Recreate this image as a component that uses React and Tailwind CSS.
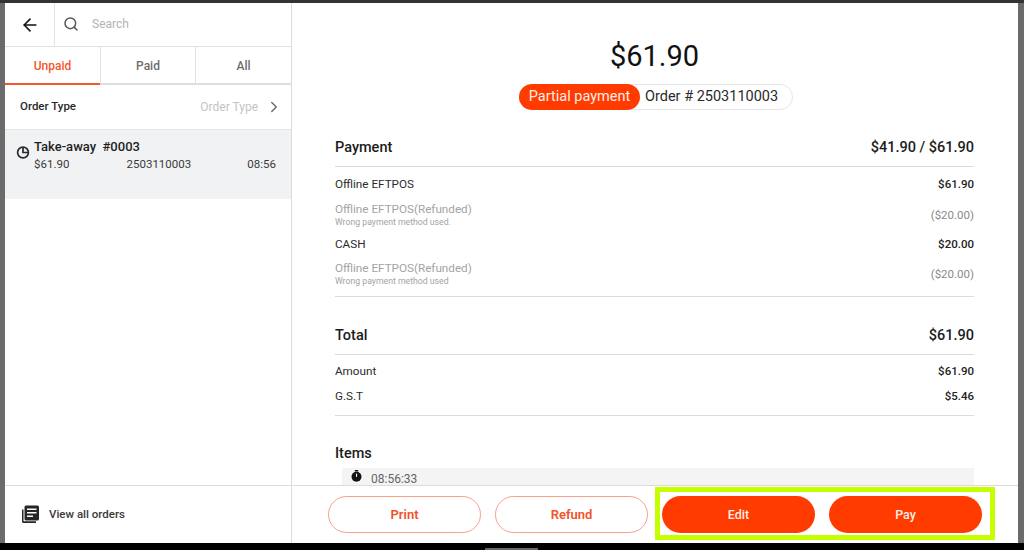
import React from "react";
import { ArrowLeft, Search, ChevronRight } from "lucide-react";

const Row = ({ label, value, sub, muted, className = "" }) => (
  <div className={`flex justify-between items-center ${className}`}>
    <div className="flex flex-col">
      <span className={`text-[11.7px] leading-[14px] ${muted ? "text-[#a3a3a3]" : "text-[#2b2b2b]"}`}>{label}</span>
      {sub && <span className="text-[8.7px] leading-[10px] mt-[1px] text-[#a3a3a3]">{sub}</span>}
    </div>
    <span className={`text-[11.5px] leading-[14px] ${muted ? "text-[#8a8a8a]" : "font-medium text-[#222]"}`}>{value}</span>
  </div>
);

const Head = ({ label, value, className = "" }) => (
  <div className={`flex justify-between items-center border-b border-[#dcdcdc] ${className}`}>
    <span className="text-[14.5px] leading-[16px] font-medium text-[#1c1c1c]">{label}</span>
    {value && <span className="text-[14.5px] leading-[16px] font-medium text-[#1c1c1c]">{value}</span>}
  </div>
);

const Outline = ({ children }) => (
  <button className="w-[153px] h-[37px] pt-px rounded-full border border-[#f4a28c] bg-white text-[#f4512c] text-[13px] font-semibold">{children}</button>
);
const Solid = ({ children }) => (
  <button className="w-[153px] h-[37px] pt-px rounded-full bg-[#ff3b00] text-[#fbeee9] text-[12.5px] font-medium">{children}</button>
);

const ClockPie = () => (
  <svg width="14" height="14" viewBox="0 0 14 14" fill="none" stroke="#2a2a2a" strokeWidth="1.7">
    <circle cx="7" cy="7.5" r="5.4" />
    <path d="M7 2.2V7.5H12.2" />
  </svg>
);

const Stopwatch = () => (
  <svg width="11" height="12" viewBox="0 0 11 12">
    <rect x="3.8" y="0" width="3.4" height="1.5" fill="#111" />
    <circle cx="5.5" cy="6.8" r="5" fill="#111" />
    <rect x="5" y="3.6" width="1.1" height="3.2" fill="#fff" />
  </svg>
);

const Orders = () => (
  <svg width="18" height="19" viewBox="0 0 18 19" fill="#262626">
    <path d="M1 4.5h1.5v11.8H15V18H2.5A1.5 1.5 0 0 1 1 16.5Z" />
    <path fillRule="evenodd" d="M5 0.5h11.5A1.5 1.5 0 0 1 18 2v12a1.5 1.5 0 0 1-1.5 1.5H5A1.5 1.5 0 0 1 3.5 14V2A1.5 1.5 0 0 1 5 0.5ZM6 3.6v1.5h9.5V3.6Zm0 3.4v1.5h9.5V7Zm0 3.4v1.5h6v-1.5Z" />
  </svg>
);

export default function App() {
  return (
    <div className="relative w-[1024px] h-[550px] overflow-hidden flex flex-col bg-[#6b6b6b] font-['Roboto',sans-serif]">
      <div className="h-[3px] bg-[#333]" />
      <div className="flex-1 min-h-0 flex pl-[5px] pr-[6px]">
        <div className="flex-1 flex flex-col bg-white min-w-0">
          <div className="flex-1 min-h-0 flex">
            <aside className="w-[287px] shrink-0 border-r border-[#dcdcdc] flex flex-col">
              <div className="h-[44px] flex border-b border-[#e2e2e2]">
                <div className="w-[50px] flex items-center justify-center border-r border-[#e2e2e2]">
                  <ArrowLeft size={20} strokeWidth={1.9} color="#111" />
                </div>
                <div className="flex-1 flex items-center pl-[8px] pb-px">
                  <Search size={16} strokeWidth={2.2} color="#555" />
                  <span className="ml-[13px] text-[12px] text-[#b4b4b4]">Search</span>
                </div>
              </div>
              <div className="h-[38px] flex border-b-2 border-[#dedede] text-[12px] font-medium text-[#6e6e6e]">
                <div className="w-[95px] -mb-[2px] pt-px flex items-center justify-center border-b-2 border-[#f4572d] text-[#f4572d]">Unpaid</div>
                <div className="w-[95px] pt-px flex items-center justify-center border-l border-[#e2e2e2]">Paid</div>
                <div className="flex-1 pt-px flex items-center justify-center border-l border-[#e2e2e2]">All</div>
              </div>
              <div className="h-[44px] flex items-center justify-between pl-[15px] pr-[8px] text-[12px]">
                <span className="font-medium text-[#2a2a2a] text-[11.5px]">Order Type</span>
                <span className="flex items-center gap-[7px] text-[#c4c4c4]">
                  Order Type
                  <ChevronRight size={18} color="#666" strokeWidth={1.8} />
                </span>
              </div>
              <div className="h-[70px] bg-[#f1f2f4] border-t border-[#e6e6e6] flex pl-[12px] pr-[15px] pt-[9px]">
                <div className="w-[18px] pt-[6px] shrink-0 -ml-px"><ClockPie /></div>
                <div className="flex-1">
                  <div className="text-[13px] leading-[15px] font-medium text-[#1f1f1f] whitespace-pre">Take-away  #0003</div>
                  <div className="flex justify-between mt-[3px] text-[11.5px] leading-[14px] text-[#3a3a3a]">
                    <span>$61.90</span>
                    <span className="ml-[1px]">2503110003</span>
                    <span>08:56</span>
                  </div>
                </div>
              </div>
            </aside>
            <main className="flex-1 min-w-0 overflow-hidden pl-[43px] pr-[44px]">
              <div className="text-center text-[29px] leading-[36px] text-[#111] mt-[35px]">$61.90</div>
              <div className="flex justify-center mt-[10px] pl-[3px]">
                <div className="flex h-[26px] w-[274px] items-center rounded-full border border-[#e6e6e6] text-[14.5px]">
                  <span className="-ml-px h-[26px] w-[121px] flex items-center justify-center rounded-full bg-[#ff3b00] text-[#fdeee8]">Partial payment</span>
                  <span className="ml-[5px] text-[#2a2a2a]">Order # 2503110003</span>
                </div>
              </div>
              <Head label="Payment" value="$41.90 / $61.90" className="h-[41px] mt-[16px] pt-[3px]" />
              <Row className="mt-[10px]" label="Offline EFTPOS" value="$61.90" />
              <Row className="mt-[11px]" muted label="Offline EFTPOS(Refunded)" sub="Wrong payment method used." value="($20.00)" />
              <Row className="mt-[10px]" label="CASH" value="$20.00" />
              <Row className="mt-[10px]" muted label="Offline EFTPOS(Refunded)" sub="Wrong payment method used" value="($20.00)" />
              <div className="mt-[10px] border-b border-[#dcdcdc]" />
              <Head label="Total" value="$61.90" className="h-[58px] pt-[20px]" />
              <Row className="mt-[9px]" label="Amount" value="$61.90" />
              <Row className="mt-[11px]" label="G.S.T" value="$5.46" />
              <div className="mt-[12px] border-b border-[#dcdcdc]" />
              <div className="mt-[30px] text-[14.5px] leading-[16px] font-medium text-[#1c1c1c]">Items</div>
              <div className="ml-[7px] mt-[6px] h-[17px] bg-[#f4f4f4] flex items-start pt-[2px] pl-[9px]">
                <Stopwatch />
                <span className="ml-[9px] mt-[2px] text-[12px] leading-[14px] text-[#666]">08:56:33</span>
              </div>
            </main>
          </div>
          <div className="h-[58px] flex border-t border-[#dcdcdc] bg-white">
            <div className="w-[287px] shrink-0 border-r border-[#dcdcdc] flex items-center pl-[16px]">
              <Orders />
              <span className="ml-[10px] text-[11.5px] font-medium text-[#3a3a3a]">View all orders</span>
            </div>
            <div className="flex-1 flex items-center pl-[36px] gap-[14px]">
              <Outline>Print</Outline>
              <Outline>Refund</Outline>
              <Solid>Edit</Solid>
              <Solid>Pay</Solid>
            </div>
          </div>
        </div>
      </div>
      <div className="h-[7px] bg-black flex items-end pl-[485px]">
        <div className="w-[53px] h-[2px] bg-[#666]" />
      </div>
      <div className="absolute left-[655px] top-[487px] w-[340px] h-[53px] border-[5px] border-[#c6ff00] pointer-events-none" />
    </div>
  );
}
